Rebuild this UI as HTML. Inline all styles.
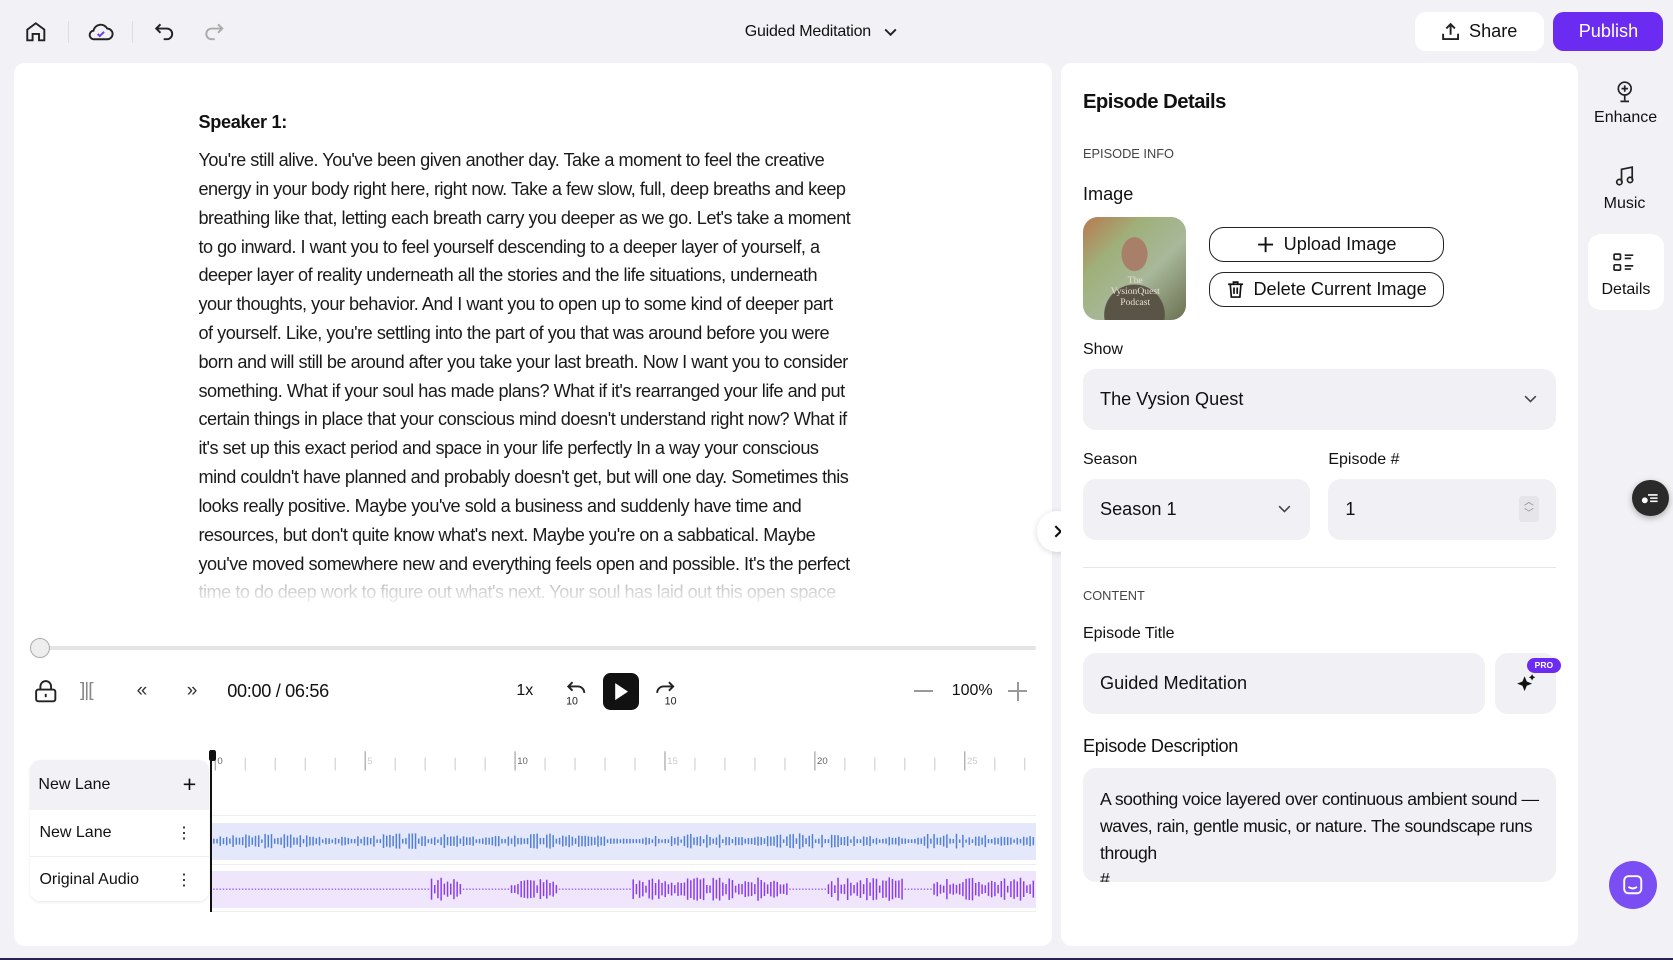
<!DOCTYPE html>
<html><head><meta charset="utf-8">
<style>
*{box-sizing:border-box;margin:0;padding:0}
html,body{width:1673px;height:960px;overflow:hidden;background:#f2f1f6}
#w{zoom:1.06696;width:1568px;height:900px;position:relative;font-family:"Liberation Sans",sans-serif;color:#111;background:#f2f1f6}
.a{position:absolute}
.card{background:#fff;border-radius:10px}
.txt{font-size:17px;line-height:27px;color:#1a1a1a;white-space:nowrap;letter-spacing:-0.45px}
.lbl{font-size:15px;color:#111}
.field{background:#f1f0f5;border-radius:12px;font-size:17px;color:#111}
.btn{border:1.5px solid #222;border-radius:14px;font-size:17px;display:flex;align-items:center;justify-content:center;gap:8px;background:#fff}
svg{display:block}
.lane{font-size:15px}
</style></head><body><div id="w">
<svg class="a" style="left:22px;top:18px" width="24" height="24" viewBox="0 0 24 24" fill="none" stroke="#222" stroke-width="1.8"><path d="M4 10l8-6 8 6v10h-5v-6h-6v6H4z"/></svg>
<div class="a" style="left:64px;top:20px;width:1px;height:20px;background:#ddd"></div>
<svg class="a" style="left:82px;top:18px" width="26" height="24" viewBox="0 0 26 24" fill="none" stroke="#222" stroke-width="1.8"><path d="M7 19h12a5 5 0 0 0 0-10 7 7 0 0 0-13 2 4 4 0 0 0 1 8z"/><path d="M10 14l2 2 4-4" stroke="#6d3ce8"/></svg>
<div class="a" style="left:124px;top:20px;width:1px;height:20px;background:#ddd"></div>
<svg class="a" style="left:143px;top:19px" width="22" height="22" viewBox="0 0 22 22" fill="none" stroke="#222" stroke-width="1.8"><path d="M7 4L3 8l4 4M3 8h10a5 5 0 0 1 0 10h-3"/></svg>
<svg class="a" style="left:189px;top:19px" width="22" height="22" viewBox="0 0 22 22" fill="none" stroke="#aaa" stroke-width="1.8"><path d="M15 4l4 4-4 4M19 8H9a5 5 0 0 0 0 10h3"/></svg>
<div class="a" style="left:698px;top:22px;font-size:15px;letter-spacing:-0.2px">Guided Meditation</div>
<svg class="a" style="left:827px;top:22px" width="16" height="16" viewBox="0 0 16 16" fill="none" stroke="#222" stroke-width="1.8"><path d="M3 6l5 5 5-5"/></svg>
<div class="a card" style="left:1326px;top:11px;width:121px;height:37px;border-radius:10px;display:flex;align-items:center;justify-content:center;gap:8px;font-size:17px">
<svg width="18" height="18" viewBox="0 0 18 18" fill="none" stroke="#222" stroke-width="1.8"><path d="M9 12V2M5 6l4-4 4 4M2 11v5h14v-5"/></svg>Share</div>
<div class="a" style="left:1456px;top:11px;width:103px;height:37px;border-radius:10px;background:#6c2bf0;color:#fff;display:flex;align-items:center;justify-content:center;font-size:17px">Publish</div>

<div class="a card" style="left:13px;top:59px;width:973px;height:828px"></div>
<div class="a" style="left:186px;top:105px;font-size:17px;font-weight:bold;letter-spacing:-0.3px">Speaker 1:</div>
<div class="a txt" style="left:186px;top:137px">You're still alive. You've been given another day. Take a moment to feel the creative<br>energy in your body right here, right now. Take a few slow, full, deep breaths and keep<br>breathing like that, letting each breath carry you deeper as we go. Let's take a moment<br>to go inward. I want you to feel yourself descending to a deeper layer of yourself, a<br>deeper layer of reality underneath all the stories and the life situations, underneath<br>your thoughts, your behavior. And I want you to open up to some kind of deeper part<br>of yourself. Like, you're settling into the part of you that was around before you were<br>born and will still be around after you take your last breath. Now I want you to consider<br>something. What if your soul has made plans? What if it's rearranged your life and put<br>certain things in place that your conscious mind doesn't understand right now? What if<br>it's set up this exact period and space in your life perfectly In a way your conscious<br>mind couldn't have planned and probably doesn't get, but will one day. Sometimes this<br>looks really positive. Maybe you've sold a business and suddenly have time and<br>resources, but don't quite know what's next. Maybe you're on a sabbatical. Maybe<br>you've moved somewhere new and everything feels open and possible. It's the perfect<br><span style="color:#aaa">time to do deep work to figure out what's next. Your soul has laid out this open space</span></div>
<div class="a" style="left:180px;top:540px;width:640px;height:30px;background:linear-gradient(rgba(255,255,255,0),#fff)"></div>
<div class="a" style="left:972px;top:479px;width:38px;height:38px;border-radius:50%;background:#fff;box-shadow:0 1px 6px rgba(0,0,0,.15);display:flex;align-items:center;justify-content:center"><svg width="14" height="14" viewBox="0 0 14 14" fill="none" stroke="#111" stroke-width="2"><path d="M5 2l5 5-5 5"/></svg></div>

<div class="a" style="left:30px;top:605px;width:941px;height:4px;background:#e4e4e8;border-radius:2px"></div>
<div class="a" style="left:28px;top:598px;width:19px;height:19px;border-radius:50%;background:#eee;border:1.5px solid #aaa"></div>
<svg class="a" style="left:32px;top:637px" width="22" height="22" viewBox="0 0 22 22" fill="none" stroke="#222" stroke-width="1.8"><rect x="2" y="9" width="18" height="11" rx="2"/><path d="M6 9V6a5 5 0 0 1 10 0v3M11 13v3"/></svg>
<div class="a" style="left:75px;top:637px;font-size:18px;color:#888;letter-spacing:-1px">]|[</div>
<div class="a" style="left:128px;top:637px;font-size:18px;color:#333">«</div>
<div class="a" style="left:175px;top:637px;font-size:18px;color:#333">»</div>
<div class="a" style="left:213px;top:638px;font-size:17px;letter-spacing:-0.3px">00:00 / 06:56</div>
<div class="a" style="left:484px;top:639px;font-size:15px">1x</div>
<svg class="a" style="left:529px;top:636px" width="24" height="26" viewBox="0 0 24 26" fill="none" stroke="#222" stroke-width="1.8"><path d="M8 3L4 7l4 4M4 7h9a6 6 0 0 1 6 6"/><text x="2" y="24" font-size="10" fill="#222" stroke="none" font-family="Liberation Sans">10</text></svg>
<div class="a" style="left:565px;top:631px;width:34px;height:34px;border-radius:7px;background:#111;display:flex;align-items:center;justify-content:center"><svg width="16" height="18" viewBox="0 0 16 18"><path d="M3 1l12 8-12 8z" fill="#fff"/></svg></div>
<svg class="a" style="left:613px;top:636px" width="24" height="26" viewBox="0 0 24 26" fill="none" stroke="#222" stroke-width="1.8"><path d="M14 3l4 4-4 4M18 7H9a6 6 0 0 0-6 6"/><text x="10" y="24" font-size="10" fill="#222" stroke="none" font-family="Liberation Sans">10</text></svg>
<div class="a" style="left:857px;top:647px;width:17px;height:2px;background:#999"></div>
<div class="a" style="left:892px;top:639px;font-size:15px">100%</div>
<div class="a" style="left:945px;top:647px;width:18px;height:2px;background:#999"></div>
<div class="a" style="left:953px;top:639px;width:2px;height:18px;background:#999"></div>

<div class="a" style="left:28px;top:712px;width:168px;height:132px;border-radius:10px;background:#fff;box-shadow:0 1px 3px rgba(0,0,0,.08);overflow:hidden">
 <div style="height:47px;background:#f2f1f6;display:flex;align-items:center;justify-content:space-between;padding:0 12px 0 8px" class="lane">New Lane<span style="font-size:22px">+</span></div>
 <div style="height:44px;display:flex;align-items:center;justify-content:space-between;padding:0 16px 0 9px;border-bottom:1px solid #eee" class="lane">New Lane<span>⋮</span></div>
 <div style="height:44px;display:flex;align-items:center;justify-content:space-between;padding:0 16px 0 9px" class="lane">Original Audio<span>⋮</span></div>
</div>
<svg class="a" id="ruler" style="left:198px;top:700px" width="773" height="24"></svg>
<div class="a" style="left:198px;top:771px;width:773px;height:35px;background:#e5e8fb"></div>
<div class="a" style="left:198px;top:816px;width:773px;height:35px;background:#efe6fb"></div>
<div class="a" style="left:198px;top:764px;width:773px;height:1px;background:#eee"></div>
<div class="a" style="left:198px;top:810px;width:773px;height:1px;background:#eee"></div>
<div class="a" style="left:198px;top:854px;width:773px;height:1px;background:#eee"></div>
<svg class="a" id="wv" style="left:198px;top:771px" width="773" height="80"></svg>
<div class="a" style="left:197px;top:703px;width:2px;height:152px;background:#111"></div>
<div class="a" style="left:196px;top:703px;width:6px;height:10px;background:#111;border-radius:2px"></div>

<div class="a card" style="left:994px;top:59px;width:485px;height:828px"></div>
<div class="a" style="left:1015px;top:85px;font-size:19px;font-weight:bold;letter-spacing:-0.5px">Episode Details</div>
<div class="a" style="left:1015px;top:137px;font-size:12px;color:#444">EPISODE INFO</div>
<div class="a lbl" style="left:1015px;top:172px;font-size:17px">Image</div>
<div class="a" style="left:1015px;top:203px;width:97px;height:97px;border-radius:14px;overflow:hidden;background:radial-gradient(ellipse 20px 26px at 50% 36%,#a8806a 60%,transparent 62%),radial-gradient(ellipse 40px 40px at 50% 95%,#5a5446 70%,transparent 72%),linear-gradient(135deg,#b87a50 0%,#9fb07a 30%,#a8b89a 60%,#6a7050 100%)">
<div style="position:absolute;left:26px;top:56px;width:46px;text-align:center;color:#e8e0d0;font-family:'Liberation Serif',serif;font-size:9px;line-height:10px">The<br>VysionQuest<br>Podcast</div></div>
<div class="a btn" style="left:1133px;top:213px;width:220px;height:33px"><svg width="18" height="18" viewBox="0 0 18 18" stroke="#111" stroke-width="1.8"><path d="M9 2v14M2 9h14"/></svg>Upload Image</div>
<div class="a btn" style="left:1133px;top:255px;width:220px;height:33px"><svg width="18" height="18" viewBox="0 0 18 18" fill="none" stroke="#111" stroke-width="1.6"><path d="M2 4h14M7 4V2h4v2M4 4l1 12h8l1-12M7.5 7v6M10.5 7v6"/></svg>Delete Current Image</div>
<div class="a lbl" style="left:1015px;top:320px">Show</div>
<div class="a field" style="left:1015px;top:346px;width:443px;height:57px;padding:19px 16px">The Vysion Quest</div>
<svg class="a" style="left:1427px;top:368px" width="14" height="12" viewBox="0 0 14 12" fill="none" stroke="#444" stroke-width="1.5"><path d="M2 3l5 5 5-5"/></svg>
<div class="a lbl" style="left:1015px;top:423px">Season</div>
<div class="a lbl" style="left:1245px;top:423px">Episode #</div>
<div class="a field" style="left:1015px;top:449px;width:213px;height:57px;padding:19px 16px">Season 1</div>
<svg class="a" style="left:1197px;top:471px" width="14" height="12" viewBox="0 0 14 12" fill="none" stroke="#444" stroke-width="1.5"><path d="M2 3l5 5 5-5"/></svg>
<div class="a field" style="left:1245px;top:449px;width:213px;height:57px;padding:19px 16px">1</div>
<div class="a" style="left:1424px;top:465px;width:18px;height:24px;background:#e6e5ea;border-radius:3px;font-size:9px;color:#888;text-align:center;line-height:10px;padding-top:2px">︿<br>﹀</div>
<div class="a" style="left:1015px;top:531px;width:443px;height:1px;background:#e6e6ea"></div>
<div class="a" style="left:1015px;top:551px;font-size:12px;color:#444">CONTENT</div>
<div class="a lbl" style="left:1015px;top:586px">Episode Title</div>
<div class="a field" style="left:1015px;top:612px;width:377px;height:57px;padding:19px 16px">Guided Meditation</div>
<div class="a field" style="left:1401px;top:612px;width:57px;height:57px;display:flex;align-items:center;justify-content:center"><svg width="20" height="20" viewBox="0 0 20 20" fill="#111"><path d="M9 3l2 5 5 2-5 2-2 5-2-5-5-2 5-2z"/><path d="M16 1l1 2 2 1-2 1-1 2-1-2-2-1 2-1z"/></svg></div>
<div class="a" style="left:1431px;top:617px;width:32px;height:14px;border-radius:7px;background:#6c2bf0;color:#fff;font-size:8px;font-weight:bold;text-align:center;line-height:14px">PRO</div>
<div class="a" style="left:1015px;top:690px;font-size:17px;letter-spacing:-0.3px">Episode Description</div>
<div class="a field" style="left:1015px;top:720px;width:443px;height:107px;padding:17px 12px 0 16px;line-height:25px;overflow:hidden;font-size:16.5px;letter-spacing:-0.4px">A soothing voice layered over continuous ambient sound —waves, rain, gentle music, or nature. The soundscape runs through<br>#</div>

<svg class="a" style="left:1512px;top:74px" width="22" height="24" viewBox="0 0 22 24" fill="none" stroke="#222" stroke-width="1.6"><circle cx="11" cy="9" r="6"/><path d="M8 9h6M11 6v6M11 15v5M7 21h8"/></svg>
<div class="a" style="left:1494px;top:102px;font-size:15px">Enhance</div>
<svg class="a" style="left:1512px;top:155px" width="22" height="22" viewBox="0 0 22 22" fill="none" stroke="#222" stroke-width="1.6"><path d="M8 16V4l10-2v12"/><circle cx="6" cy="16" r="2.5"/><circle cx="16" cy="14" r="2.5"/></svg>
<div class="a" style="left:1503px;top:183px;font-size:15px">Music</div>
<div class="a card" style="left:1488px;top:219px;width:72px;height:72px;border-radius:12px"></div>
<svg class="a" style="left:1512px;top:236px" width="22" height="20" viewBox="0 0 22 20" fill="none" stroke="#222" stroke-width="1.6"><rect x="1" y="2" width="6" height="5" rx="1"/><rect x="1" y="12" width="6" height="5" rx="1"/><path d="M11 3h8M11 6h6M11 13h8M11 16h6"/></svg>
<div class="a" style="left:1501px;top:263px;font-size:15px">Details</div>
<div class="a" style="left:1530px;top:450px;width:34px;height:34px;border-radius:50%;background:#2a2a2a;box-shadow:0 2px 6px rgba(0,0,0,.3)"><svg width="34" height="34" viewBox="0 0 34 34" stroke="#fff" stroke-width="1.5"><path d="M15 14h9M17 17h7M17 20h7"/><circle cx="12" cy="19" r="2" fill="#fff"/></svg></div>
<div class="a" style="left:1508px;top:807px;width:45px;height:45px;border-radius:50%;background:#7a4ef2;display:flex;align-items:center;justify-content:center"><svg width="22" height="22" viewBox="0 0 22 22" fill="none" stroke="#fff" stroke-width="1.8"><rect x="3" y="3" width="16" height="16" rx="4"/><path d="M7 13q4 3 8 0"/></svg></div>
<div class="a" style="left:0;top:898px;width:1568px;height:2px;background:#2a2250"></div>
</div>
<script>
var r=document.getElementById('ruler'),s='';
for(var i=0;i<28;i++){var x=4+i*28.1,big=i%5==0;s+='<line x1="'+x+'" x2="'+x+'" y1="'+(big?4:10)+'" y2="22" stroke="'+(big?'#999':'#ccc')+'" stroke-width="1"/>';if(big)s+='<text x="'+(x+2)+'" y="16" font-size="9" fill="'+(i%10==0?'#666':'#ccc')+'" font-family="Liberation Sans">'+i+'</text>';}
r.innerHTML=s;
var w=document.getElementById('wv');s='';var seed=3;function rnd(){seed=(seed*9301+49297)%233280;return seed/233280;}
for(var x=2;x<773;x+=3){var e=0.4+0.6*Math.abs(Math.sin(x/40));var h=3+rnd()*12*e;s+='<rect x="'+x+'" y="'+(17-h/2)+'" width="1.4" height="'+h+'" fill="#4f7fd6"/>';}
for(var x=2;x<773;x+=3){var on=(x>205&&x<235)||(x>280&&x<325)||(x>392&&x<540)||(x>575&&x<650)||x>675;var h=on?(6+rnd()*16):1;s+='<rect x="'+x+'" y="'+(62-h/2)+'" width="1.4" height="'+h+'" fill="#8a3cf0"/>';}
w.innerHTML=s;
</script>
</body></html>
